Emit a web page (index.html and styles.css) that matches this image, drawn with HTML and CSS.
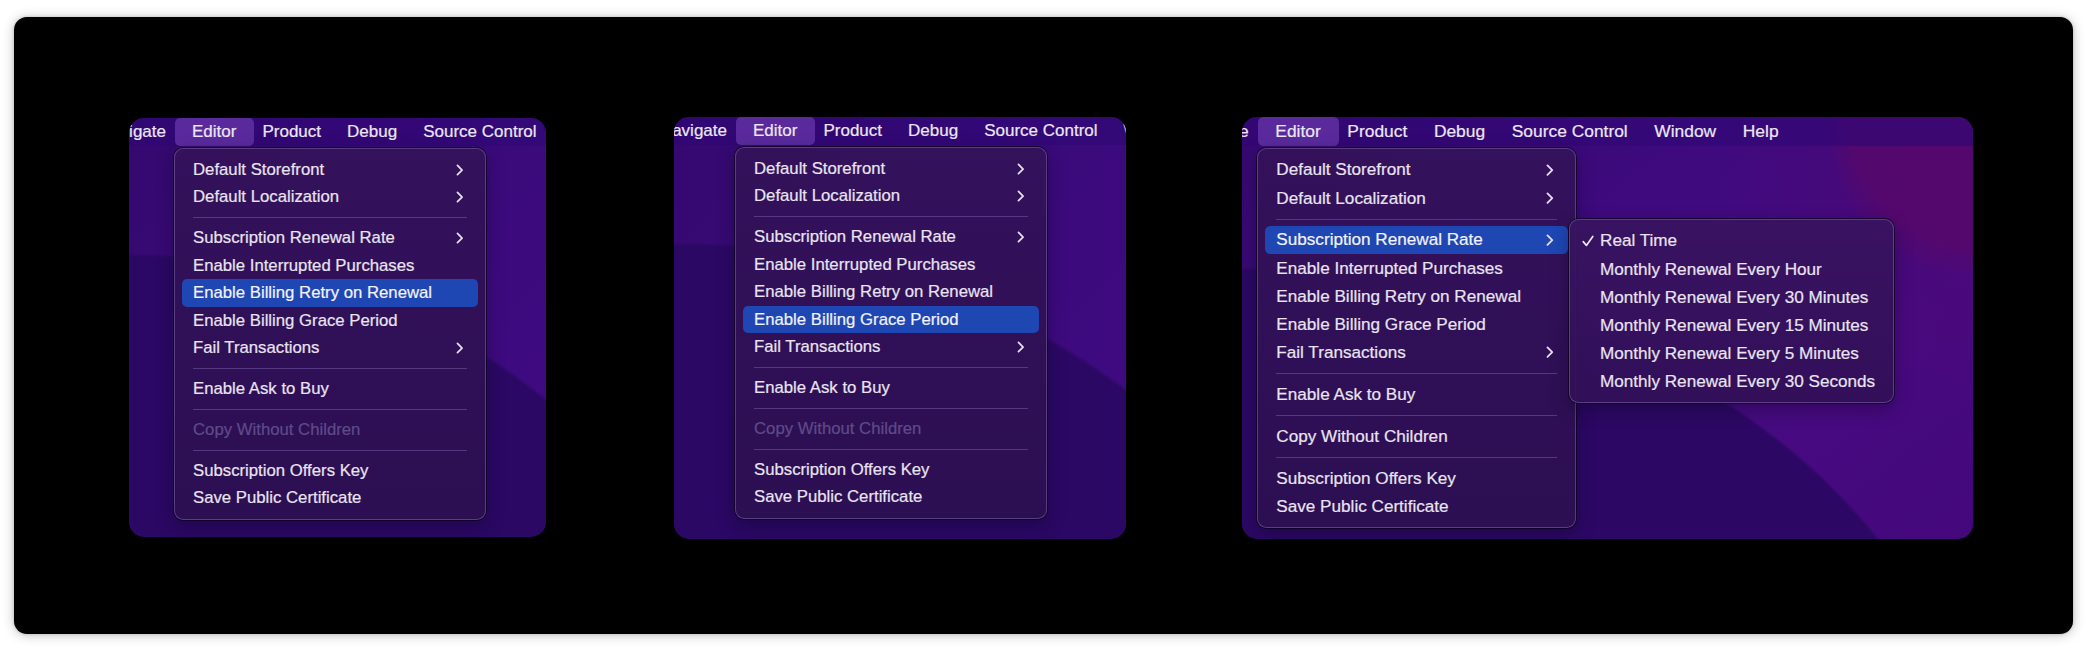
FILE: index.html
```html
<!DOCTYPE html>
<html lang="en">
<head>
<meta charset="utf-8">
<title>StoreKit Editor menus</title>
<link rel="stylesheet" href="styles.css">
</head>
<body>
<div class="frame">

  <!-- Panel 1 -->
  <section class="panel panel-1">
    <nav class="menubar">
      <span class="mb-lead"><span>Navigate</span></span>
      <span class="mb-item active">Editor
        <div class="menu">
          <div class="row sub"><span>Default Storefront</span><svg class="chev" viewBox="0 0 8 13"><path d="M1.5 1.5 L6.5 6.5 L1.5 11.5"/></svg></div>
          <div class="row sub"><span>Default Localization</span><svg class="chev" viewBox="0 0 8 13"><path d="M1.5 1.5 L6.5 6.5 L1.5 11.5"/></svg></div>
          <div class="sep"></div>
          <div class="row sub"><span>Subscription Renewal Rate</span><svg class="chev" viewBox="0 0 8 13"><path d="M1.5 1.5 L6.5 6.5 L1.5 11.5"/></svg></div>
          <div class="row"><span>Enable Interrupted Purchases</span></div>
          <div class="row hl"><span>Enable Billing Retry on Renewal</span></div>
          <div class="row"><span>Enable Billing Grace Period</span></div>
          <div class="row sub"><span>Fail Transactions</span><svg class="chev" viewBox="0 0 8 13"><path d="M1.5 1.5 L6.5 6.5 L1.5 11.5"/></svg></div>
          <div class="sep"></div>
          <div class="row"><span>Enable Ask to Buy</span></div>
          <div class="sep"></div>
          <div class="row disabled"><span>Copy Without Children</span></div>
          <div class="sep"></div>
          <div class="row"><span>Subscription Offers Key</span></div>
          <div class="row"><span>Save Public Certificate</span></div>
        </div>
      </span>
      <span class="mb-item">Product</span>
      <span class="mb-item">Debug</span>
      <span class="mb-item">Source Control</span>
    </nav>
  </section>

  <!-- Panel 2 -->
  <section class="panel panel-2">
    <nav class="menubar">
      <span class="mb-lead"><span>Navigate</span></span>
      <span class="mb-item active">Editor
        <div class="menu">
          <div class="row sub"><span>Default Storefront</span><svg class="chev" viewBox="0 0 8 13"><path d="M1.5 1.5 L6.5 6.5 L1.5 11.5"/></svg></div>
          <div class="row sub"><span>Default Localization</span><svg class="chev" viewBox="0 0 8 13"><path d="M1.5 1.5 L6.5 6.5 L1.5 11.5"/></svg></div>
          <div class="sep"></div>
          <div class="row sub"><span>Subscription Renewal Rate</span><svg class="chev" viewBox="0 0 8 13"><path d="M1.5 1.5 L6.5 6.5 L1.5 11.5"/></svg></div>
          <div class="row"><span>Enable Interrupted Purchases</span></div>
          <div class="row"><span>Enable Billing Retry on Renewal</span></div>
          <div class="row hl"><span>Enable Billing Grace Period</span></div>
          <div class="row sub"><span>Fail Transactions</span><svg class="chev" viewBox="0 0 8 13"><path d="M1.5 1.5 L6.5 6.5 L1.5 11.5"/></svg></div>
          <div class="sep"></div>
          <div class="row"><span>Enable Ask to Buy</span></div>
          <div class="sep"></div>
          <div class="row disabled"><span>Copy Without Children</span></div>
          <div class="sep"></div>
          <div class="row"><span>Subscription Offers Key</span></div>
          <div class="row"><span>Save Public Certificate</span></div>
        </div>
      </span>
      <span class="mb-item">Product</span>
      <span class="mb-item">Debug</span>
      <span class="mb-item">Source Control</span>
      <span class="mb-item">Window</span>
    </nav>
  </section>

  <!-- Panel 3 -->
  <section class="panel panel-3">
    <nav class="menubar">
      <span class="mb-lead"><span>Navigate</span></span>
      <span class="mb-item active">Editor
        <div class="menu">
          <div class="row sub"><span>Default Storefront</span><svg class="chev" viewBox="0 0 8 13"><path d="M1.5 1.5 L6.5 6.5 L1.5 11.5"/></svg></div>
          <div class="row sub"><span>Default Localization</span><svg class="chev" viewBox="0 0 8 13"><path d="M1.5 1.5 L6.5 6.5 L1.5 11.5"/></svg></div>
          <div class="sep"></div>
          <div class="row sub hl open"><span>Subscription Renewal Rate</span><svg class="chev" viewBox="0 0 8 13"><path d="M1.5 1.5 L6.5 6.5 L1.5 11.5"/></svg>
            <div class="submenu">
              <div class="srow"><svg class="check" viewBox="0 0 12 12"><path d="M1.2 6.6 L4.4 10.4 L10.8 1.4"/></svg><span>Real Time</span></div>
              <div class="srow"><span class="nocheck"></span><span>Monthly Renewal Every Hour</span></div>
              <div class="srow"><span class="nocheck"></span><span>Monthly Renewal Every 30 Minutes</span></div>
              <div class="srow"><span class="nocheck"></span><span>Monthly Renewal Every 15 Minutes</span></div>
              <div class="srow"><span class="nocheck"></span><span>Monthly Renewal Every 5 Minutes</span></div>
              <div class="srow"><span class="nocheck"></span><span>Monthly Renewal Every 30 Seconds</span></div>
            </div>
          </div>
          <div class="row"><span>Enable Interrupted Purchases</span></div>
          <div class="row"><span>Enable Billing Retry on Renewal</span></div>
          <div class="row"><span>Enable Billing Grace Period</span></div>
          <div class="row sub"><span>Fail Transactions</span><svg class="chev" viewBox="0 0 8 13"><path d="M1.5 1.5 L6.5 6.5 L1.5 11.5"/></svg></div>
          <div class="sep"></div>
          <div class="row"><span>Enable Ask to Buy</span></div>
          <div class="sep"></div>
          <div class="row"><span>Copy Without Children</span></div>
          <div class="sep"></div>
          <div class="row"><span>Subscription Offers Key</span></div>
          <div class="row"><span>Save Public Certificate</span></div>
        </div>
      </span>
      <span class="mb-item">Product</span>
      <span class="mb-item">Debug</span>
      <span class="mb-item">Source Control</span>
      <span class="mb-item">Window</span>
      <span class="mb-item">Help</span>
    </nav>
  </section>

</div>
</body>
</html>
```

FILE: styles.css
```css
* { box-sizing: border-box; }

html, body {
  margin: 0;
  padding: 0;
  background: #ffffff;
}

body {
  width: 2091px;
  height: 653px;
  overflow: hidden;
  font-family: "Liberation Sans", Arial, "Helvetica Neue", sans-serif;
  -webkit-font-smoothing: antialiased;
}

.frame {
  margin: 17px 0 0 14px;
  width: 2059px;
  height: 617px;
  background: #000;
  border-radius: 13px;
  box-shadow: 0 1px 12px rgba(0, 0, 0, 0.25), 0 0 3px rgba(0, 0, 0, 0.18);
  display: flex;
  align-items: flex-start;
  padding: 100px 0 0 115px;
}

/* ---------- panels (wallpaper) ---------- */
.panel {
  position: relative;
  overflow: hidden;
  border-radius: 15px;
  font-size: 17px;
  color: #ece7f3;
  -webkit-text-stroke: 0.2px currentColor;
}

.panel-1 {
  width: 417px;
  height: 419px;
  margin-top: 1px;
  background:
    radial-gradient(ellipse 625px 565px at 0px 700px, #2b0864 99.3%, rgba(43, 8, 100, 0) 100%),
    linear-gradient(135deg, #34096f 0%, #3a0a7a 45%, #420a84 100%);
}

.panel-2 {
  width: 452px;
  height: 422px;
  margin-left: 128px;
  background:
    radial-gradient(ellipse 680px 575px at 0px 700px, #2b0864 99.3%, rgba(43, 8, 100, 0) 100%),
    linear-gradient(135deg, #34096f 0%, #3a0a7a 45%, #420a84 100%);
}

.panel-3 {
  width: 731px;
  height: 422px;
  margin-left: 116px;
  font-size: 17.4px;
  background:
    radial-gradient(ellipse 740px 550px at 0px 700px, #2c0864 99.4%, rgba(44, 8, 100, 0) 100%),
    radial-gradient(ellipse 150px 160px at 731px 0px, rgba(84, 8, 108, 0.95) 80%, rgba(84, 8, 108, 0) 100%),
    radial-gradient(ellipse 260px 260px at 731px 40px, rgba(78, 8, 116, 0.7) 0%, rgba(78, 8, 116, 0) 100%),
    linear-gradient(140deg, #36096f 0%, #3e0a7e 40%, #470a80 75%, #44087c 100%);
}

/* ---------- menu bar ---------- */
.menubar {
  display: flex;
  align-items: stretch;
  height: 1.647em;
  line-height: 1.647em;
  background: rgba(46, 6, 116, 0.6);
  white-space: nowrap;
}

.mb-lead {
  display: flex;
  justify-content: flex-end;
  flex: none;
  padding-right: 0.765em;
}
.panel-1 .mb-lead { width: 50px; }
.panel-2 .mb-lead { width: 66px; }
.panel-3 .mb-lead { width: 20px; }

.mb-item {
  position: relative;
  flex: none;
  padding: 0 0.765em;
}

.mb-item.active {
  padding: 0 1.059em 0 1em;
  margin: 0 -0.294em 0 -0.235em;
  background: #5a2a9c;
  border-radius: 0.3em;
}

/* ---------- dropdown menu ---------- */
.menu {
  position: absolute;
  top: calc(100% + 2px);
  left: -1px;
  width: 18.63em;
  font-size: 0.985em;
  line-height: normal;
  padding: 0.418em 0 0.39em;
  background: linear-gradient(180deg, rgba(52, 18, 90, 0.96) 0%, rgba(45, 15, 82, 0.96) 100%);
  border: 1px solid rgba(122, 100, 160, 0.55);
  border-radius: 0.55em;
  box-shadow: 0 0 0 1px rgba(10, 0, 25, 0.7), 0 6px 18px rgba(10, 0, 30, 0.35);
  color: #e9e4f0;
  z-index: 2;
}

.row {
  position: relative;
  display: flex;
  align-items: center;
  justify-content: space-between;
  height: 1.642em;
  margin: 0 0.418em;
  padding: 0 0.85em 0 0.657em;
  border-radius: 0.3em;
}

.row.hl {
  background: #1e47b4;
  color: #f4f2fa;
}

.row.disabled {
  color: #5e4b8a;
}

.chev {
  width: 0.45em;
  height: 0.72em;
  flex: none;
}
.chev path {
  fill: none;
  stroke: #e6e0ee;
  stroke-width: 1.9;
  stroke-linecap: round;
  stroke-linejoin: round;
}

.sep {
  height: 0.806em;
  display: flex;
  align-items: center;
  padding: 0 1.075em;
}
.sep::before {
  content: "";
  display: block;
  width: 100%;
  height: 1px;
  background: rgba(110, 84, 160, 0.6);
}

/* ---------- submenu ---------- */
.submenu {
  position: absolute;
  top: -0.418em;
  left: calc(100% + 1px);
  width: 18.96em;
  padding: 0.418em 0 0.39em;
  background: linear-gradient(180deg, rgba(56, 20, 96, 0.94) 0%, rgba(50, 16, 88, 0.94) 100%);
  border: 1px solid rgba(122, 100, 160, 0.55);
  border-radius: 0.55em;
  box-shadow: 0 0 0 1px rgba(10, 0, 25, 0.7), 0 6px 18px rgba(10, 0, 30, 0.35);
  color: #e9e4f0;
}

.srow {
  display: flex;
  align-items: center;
  height: 1.642em;
  padding-left: 0.7em;
}

.check, .nocheck {
  flex: none;
  width: 0.7em;
  height: 0.7em;
  margin-right: 0.35em;
}
.check path {
  fill: none;
  stroke: #ebe6f1;
  stroke-width: 1.7;
  stroke-linecap: round;
  stroke-linejoin: round;
}
```
